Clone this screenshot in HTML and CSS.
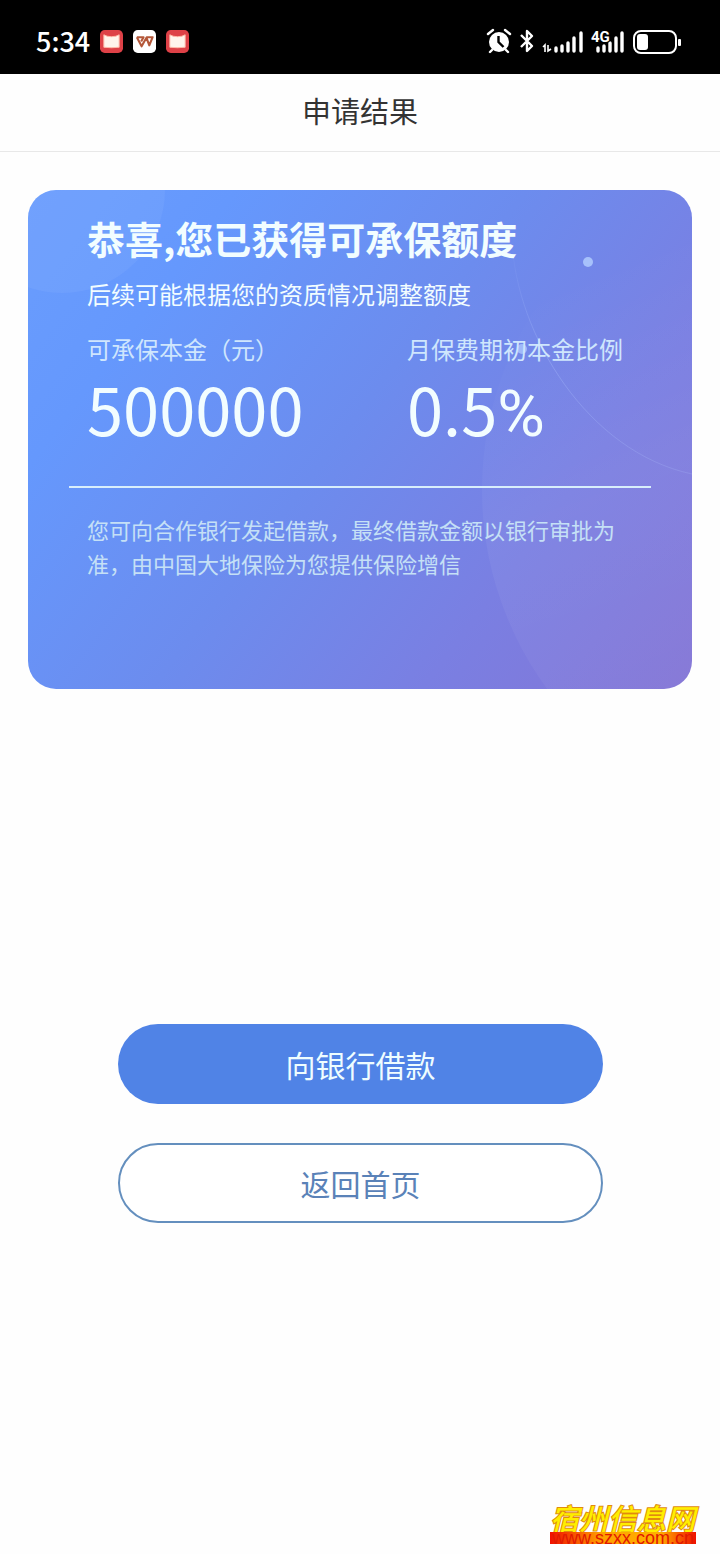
FILE: index.html
```html
<!DOCTYPE html>
<html lang="zh-CN">
<head>
<meta charset="utf-8">
<meta name="viewport" content="width=device-width, initial-scale=1">
<title>申请结果</title>
<link rel="stylesheet" href="styles.css">
</head>
<body>
<div class="status">
  <div class="status-left">
    <span class="time">5:34</span>
    <svg class="app" viewBox="0 0 24 24" aria-hidden="true"><rect width="24" height="24" rx="5" fill="#de4147"/><path d="M4 5q3 2 8 2 5 0 8-2v13q-8 1-16 0z" fill="#fff4ec" stroke="#ffb9a8" stroke-width="1"/></svg>
    <svg class="app" viewBox="0 0 24 24" aria-hidden="true"><rect width="24" height="24" rx="5" fill="#fff"/><path d="M4 7.500h7L8.500 12M4 7.500L9 17l5-9 3 8 3.500-8.500H14" fill="none" stroke="#b4583a" stroke-width="2.200" stroke-linejoin="round"/></svg>
    <svg class="app" viewBox="0 0 24 24" aria-hidden="true"><rect width="24" height="24" rx="5" fill="#de4147"/><path d="M4 5q3 2 8 2 5 0 8-2v13q-8 1-16 0z" fill="#fff4ec" stroke="#ffb9a8" stroke-width="1"/></svg>
  </div>
  <svg class="status-right" viewBox="0 0 196 36" fill="#fff" aria-hidden="true">
    <circle cx="13" cy="19" r="10"/>
    <path d="M2 11l5-4M19 7l5 4M6 27l-2 2M20 27l2 2" stroke="#fff" stroke-width="2.400" stroke-linecap="round"/>
    <path d="M12.500 13v6l5 5" fill="none" stroke="#000" stroke-width="2.400"/>
    <path d="M35 12l11 11-5 5V8l5 5-11 11" fill="none" stroke="#fff" stroke-width="2.400" stroke-linejoin="round"/>
    <path d="M57 24l2-2v7M62 22v6l3-2" fill="none" stroke="#fff" stroke-width="1.600"/>
    <path d="M70 28v-3M76 28v-5M82 28v-8M88 28v-13M95 28v-18" stroke="#fff" stroke-width="3.400" stroke-linecap="round"/>
    <path d="M112 28v-3M118 28v-5M124 28v-8M130 28v-13M136 28v-18" stroke="#fff" stroke-width="3.400" stroke-linecap="round"/>
    <text class="net" x="105" y="19">4G</text>
    <rect x="148" y="8" width="42" height="22" rx="7" fill="none" stroke="#fff" stroke-width="2"/>
    <rect x="151" y="11" width="11" height="16" rx="3"/>
    <rect x="192" y="16" width="3" height="7" rx="1"/>
  </svg>
</div>
<header class="titlebar"><h1>申请结果</h1></header>
<main class="main">
  <section class="card">
    <svg class="decor" viewBox="0 0 664 499" preserveAspectRatio="none" aria-hidden="true">
      <defs>
        <linearGradient id="disc" x1="0" y1="0" x2=".4" y2="1"><stop offset=".2" stop-color="#fff" stop-opacity="0"/><stop offset=".5" stop-color="#fff" stop-opacity=".05"/><stop offset="1" stop-color="#fff" stop-opacity=".02"/></linearGradient>
        <linearGradient id="arc" x1="0" y1="0" x2="0" y2="1"><stop offset="0" stop-color="#b4c8ff" stop-opacity="0"/><stop offset=".5" stop-color="#b4c8ff" stop-opacity=".3"/><stop offset="1" stop-color="#b4c8ff" stop-opacity=".2"/></linearGradient>
      </defs>
      <circle cx="34" cy="0" r="103" fill="#b8d4ff" opacity=".09"/>
      <circle cx="790" cy="300" r="336" fill="url(#disc)"/>
      <path d="M484 50C488 145 560 262 664 284" fill="none" stroke="url(#arc)"/>
      <circle cx="560" cy="72" r="5" fill="#b4cfff" opacity=".8"/>
      <circle cx="494" cy="159" r="5" fill="#b4cfff" opacity=".7"/>
    </svg>
    <div class="content">
      <h2>恭喜,您已获得可承保额度</h2>
      <p class="sub">后续可能根据您的资质情况调整额度</p>
      <dl class="figures">
        <div class="figure"><dt>可承保本金（元）</dt><dd>500000</dd></div>
        <div class="figure"><dt>月保费期初本金比例</dt><dd>0.5<span class="unit">%</span></dd></div>
      </dl>
      <p class="note">您可向合作银行发起借款，最终借款金额以银行审批为准，由中国大地保险为您提供保险增信</p>
    </div>
  </section>
  <div class="actions">
    <button type="button" class="btn primary">向银行借款</button>
    <button type="button" class="btn outline">返回首页</button>
  </div>
</main>
<footer class="mark">
  <span class="mark-name">宿州信息网</span>
  <span class="mark-url">www.szxx.com.cn</span>
</footer>
</body>
</html>
```
FILE: styles.css
```css
* { box-sizing: border-box; }
body {
  margin: 0;
  min-height: 100vh;
  display: flex;
  flex-direction: column;
  background: #fefefe;
  font-family: "Noto Sans CJK SC", sans-serif;
}
h1, h2, p, dl, dd { margin: 0; }
.status {
  height: 74px;
  padding: 8px 38px 0 36px;
  background: #000;
  display: flex;
  align-items: center;
  justify-content: space-between;
}
.status-left { display: flex; align-items: center; gap: 10px; }
.time { color: #fff; font-size: 27px; line-height: 32px; font-weight: 500; }
.app { width: 23px; height: 23px; }
.status-right { width: 196px; height: 36px; }
.net {
  font-family: Roboto, sans-serif;
  font-size: 15px;
  font-weight: 700;
  stroke: #000;
  stroke-width: 2px;
  paint-order: stroke;
}
.titlebar {
  height: 78px;
  padding-bottom: 6px;
  border-bottom: 1px solid #e8e8e8;
  display: flex;
  align-items: center;
  justify-content: center;
}
.titlebar h1 { font-size: 29px; line-height: 40px; font-weight: 400; color: #333; }
.main { padding: 38px 28px 0; }
.card {
  position: relative;
  overflow: hidden;
  border-radius: 28px;
  min-height: 499px;
  padding: 26px 41px 0;
  background: linear-gradient(127deg, #6a9dfd 0%, #6598fd 20%, #6c8cee 48%, #7a7fe2 74%, #8475d6 100%);
}
.decor { position: absolute; inset: 0; width: 100%; height: 100%; }
.content { position: relative; color: #f2fdff; }
.content h2 { padding: 0 18px; font-size: 38px; line-height: 44px; font-weight: 700; }
.sub { padding: 0 18px; margin-top: 16px; font-size: 24px; line-height: 36px; }
.figures {
  display: grid;
  grid-template-columns: 320px 1fr;
  padding: 20px 0 30px 18px;
  border-bottom: 2px solid #d8eefb;
}
.figure dt { font-size: 24px; line-height: 34px; color: #cfe6fd; white-space: nowrap; }
.figure dd { font-size: 65px; line-height: 84px; }
.unit { font-family: Roboto, sans-serif; }
.note { padding: 24px 18px 0; font-size: 22px; line-height: 34px; color: #c5e0f6; }
.actions {
  display: flex;
  flex-direction: column;
  gap: 39px;
  padding: 335px 89px 0 90px;
}
.btn {
  height: 80px;
  border-radius: 40px;
  font-family: inherit;
  font-size: 30px;
  line-height: 40px;
}
.primary { border: 0; background: #5083e6; color: #effdff; }
.outline { border: 2px solid #648fbe; background: #fff; color: #5a82b8; }
.mark {
  align-self: flex-end;
  margin: auto 24px 10px 0;
  display: flex;
  flex-direction: column;
}
.mark-name {
  font-size: 29px;
  line-height: 30px;
  font-weight: 500;
  font-style: italic;
  color: #ffee00;
  -webkit-text-stroke: 2px #e08a10;
  paint-order: stroke fill;
}
.mark-url {
  padding: 0 2px;
  font-family: "Liberation Sans", sans-serif;
  font-size: 18px;
  line-height: 12px;
  color: #e01800;
  background: linear-gradient(90deg, #f01000, #ffa000 35%, #ffb000 75%, #f01000);
}
```
